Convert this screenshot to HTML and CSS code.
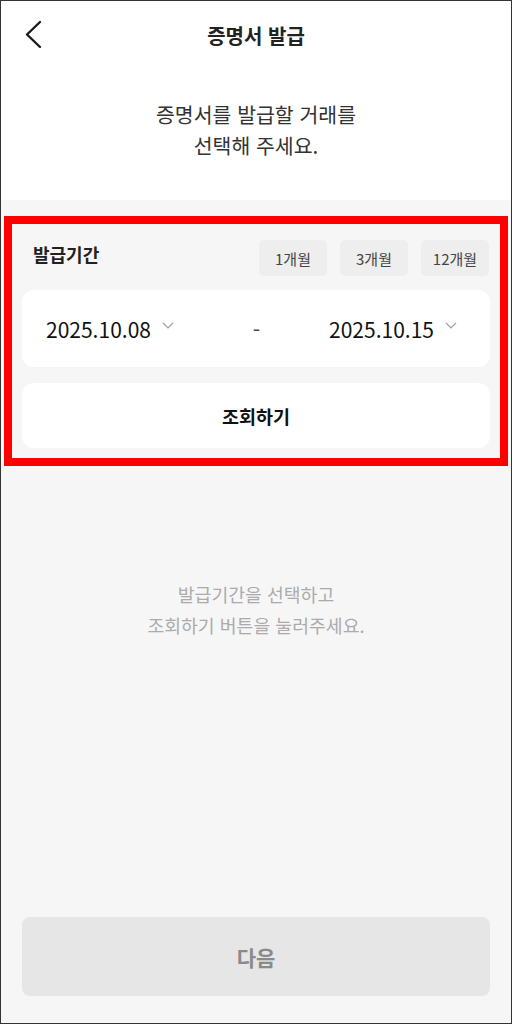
FILE: index.html
```html
<!DOCTYPE html>
<html lang="ko">
<head>
    <meta charset="utf-8">
    <meta name="viewport" content="width=device-width, initial-scale=1.0">
    <title>증명서 발급</title>
    <link rel="stylesheet" href="styles.css">
</head>
<body>
    <div class="screen">
        <div class="top">
            <div class="header">
                <button class="back" aria-label="뒤로">
                    <svg width="20" height="30" viewBox="0 0 20 30">
                        <path d="M16 2 L3 14.5 L16 27" fill="none" stroke="#1a1a1a" stroke-width="2.4" stroke-linecap="round" stroke-linejoin="round"/>
                    </svg>
                </button>
                <h1>증명서 발급</h1>
            </div>
            <p class="guide">증명서를 발급할 거래를<br>선택해 주세요.</p>
        </div>

        <div class="period">
            <div class="period-head">
                <span class="period-label">발급기간</span>
                <div class="chips">
                    <button class="chip">1개월</button>
                    <button class="chip">3개월</button>
                    <button class="chip">12개월</button>
                </div>
            </div>
            <div class="dates">
                <div class="date">
                    <span>2025.10.08</span>
                    <svg class="caret" width="12" height="7" viewBox="0 0 12 7"><path d="M1 1 L6 6 L11 1" fill="none" stroke="#a0a0a0" stroke-width="1.2"/></svg>
                </div>
                <span class="dash">-</span>
                <div class="date">
                    <span>2025.10.15</span>
                    <svg class="caret" width="12" height="7" viewBox="0 0 12 7"><path d="M1 1 L6 6 L11 1" fill="none" stroke="#a0a0a0" stroke-width="1.2"/></svg>
                </div>
            </div>
            <button class="search">조회하기</button>
        </div>

        <p class="empty">발급기간을 선택하고<br>조회하기 버튼을 눌러주세요.</p>

        <button class="next" disabled>다음</button>
    </div>
</body>
</html>
```

FILE: styles.css
```css
* {
    box-sizing: border-box;
}

body {
    margin: 0;
    font-family: "Noto Sans CJK KR", "Noto Sans", sans-serif;
    color: #1a1a1a;
}

button {
    font-family: inherit;
    border: none;
    cursor: pointer;
}

.screen {
    width: 512px;
    height: 1024px;
    border: 1px solid #333;
    background: #f6f6f6;
    display: flex;
    flex-direction: column;
}

.top {
    background: #fff;
    height: 199px;
}

.header {
    position: relative;
    height: 70px;
    display: flex;
    justify-content: center;
    align-items: center;
}

.header h1 {
    margin: 0;
    padding-bottom: 2px;
    font-size: 20px;
    font-weight: 700;
    color: #222;
}

.back {
    position: absolute;
    left: 23px;
    top: 19px;
    background: none;
    padding: 0;
}

.guide {
    margin: 28px 0 0;
    text-align: center;
    font-size: 20.5px;
    line-height: 31px;
    color: #333;
}

.period {
    margin: 16px 3px 0;
    border: 8px solid #ff0000;
    padding: 16px 10px 10px;
}

.period-head {
    display: flex;
    justify-content: space-between;
    align-items: flex-start;
    padding-right: 1px;
}

.period-label {
    margin: 1px 0 0 11px;
    font-size: 18px;
    font-weight: 700;
    color: #222;
}

.chips {
    display: flex;
    gap: 13px;
}

.chip {
    width: 68px;
    height: 36px;
    border-radius: 5px;
    background: #eeeeee;
    font-size: 15px;
    color: #444;
}

.dates {
    margin-top: 14px;
    height: 77px;
    background: #fff;
    border-radius: 12px;
    display: flex;
    align-items: center;
    justify-content: space-between;
    padding: 0 33px 0 24px;
    font-size: 21px;
    color: #111;
}

.date {
    display: flex;
    align-items: center;
    gap: 11px;
}

.caret {
    margin-top: -6px;
}

.dash {
    margin-left: 10px;
    color: #444;
}

.search {
    display: block;
    width: 100%;
    height: 65px;
    margin-top: 16px;
    background: #fff;
    border-radius: 12px;
    font-size: 18.5px;
    font-weight: 700;
    color: #111;
}

.empty {
    margin: 113px 0 0;
    text-align: center;
    font-size: 18.3px;
    line-height: 31px;
    color: #ababab;
}

.next {
    margin: auto 21px 27px;
    height: 79px;
    border-radius: 8px;
    background: #e6e6e6;
    font-size: 21px;
    font-weight: 700;
    color: #8a8a8a;
    cursor: default;
}
```
